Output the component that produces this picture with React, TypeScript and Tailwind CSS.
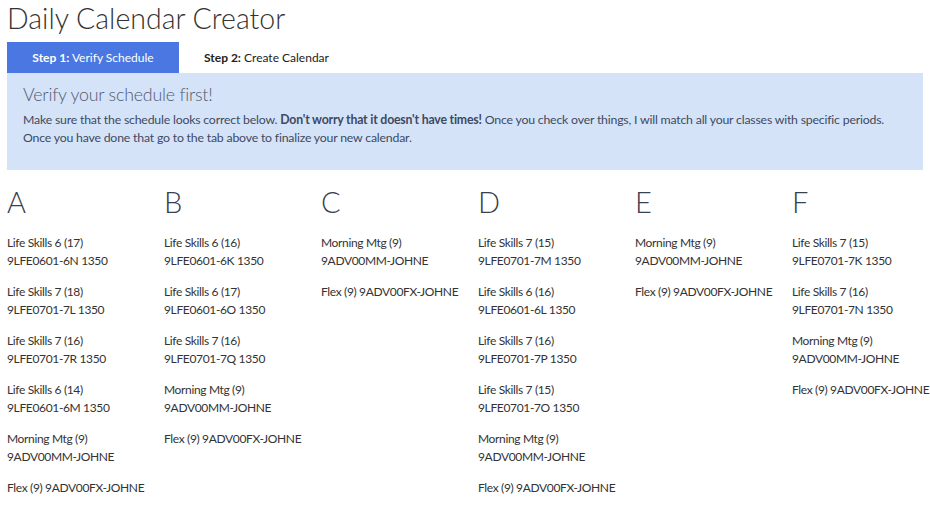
const columns: { letter: string; items: string[][] }[] = [
  {
    letter: 'A',
    items: [
      ['Life Skills 6 (17)', '9LFE0601-6N 1350'],
      ['Life Skills 7 (18)', '9LFE0701-7L 1350'],
      ['Life Skills 7 (16)', '9LFE0701-7R 1350'],
      ['Life Skills 6 (14)', '9LFE0601-6M 1350'],
      ['Morning Mtg (9)', '9ADV00MM-JOHNE'],
      ['Flex (9) 9ADV00FX-JOHNE'],
    ],
  },
  {
    letter: 'B',
    items: [
      ['Life Skills 6 (16)', '9LFE0601-6K 1350'],
      ['Life Skills 6 (17)', '9LFE0601-6O 1350'],
      ['Life Skills 7 (16)', '9LFE0701-7Q 1350'],
      ['Morning Mtg (9)', '9ADV00MM-JOHNE'],
      ['Flex (9) 9ADV00FX-JOHNE'],
    ],
  },
  {
    letter: 'C',
    items: [['Morning Mtg (9)', '9ADV00MM-JOHNE'], ['Flex (9) 9ADV00FX-JOHNE']],
  },
  {
    letter: 'D',
    items: [
      ['Life Skills 7 (15)', '9LFE0701-7M 1350'],
      ['Life Skills 6 (16)', '9LFE0601-6L 1350'],
      ['Life Skills 7 (16)', '9LFE0701-7P 1350'],
      ['Life Skills 7 (15)', '9LFE0701-7O 1350'],
      ['Morning Mtg (9)', '9ADV00MM-JOHNE'],
      ['Flex (9) 9ADV00FX-JOHNE'],
    ],
  },
  {
    letter: 'E',
    items: [['Morning Mtg (9)', '9ADV00MM-JOHNE'], ['Flex (9) 9ADV00FX-JOHNE']],
  },
  {
    letter: 'F',
    items: [
      ['Life Skills 7 (15)', '9LFE0701-7K 1350'],
      ['Life Skills 7 (16)', '9LFE0701-7N 1350'],
      ['Morning Mtg (9)', '9ADV00MM-JOHNE'],
      ['Flex (9) 9ADV00FX-JOHNE'],
    ],
  },
];

export default function App() {
  return (
    <div className="w-[930px] h-[506px] overflow-hidden bg-white px-[7px] text-[#333] font-['Lato',sans-serif]">
      {/* Title */}
      <h1 className="text-[28.5px] font-light leading-[36px] text-[#333]">Daily Calendar Creator</h1>

      {/* Tabs */}
      <div className="flex mt-[6px] text-[12px]">
        <div className="w-[172px] h-[31px] flex items-center justify-center bg-[#4a77e1] text-white">
          <span>
            <b>Step 1:</b> Verify Schedule
          </span>
        </div>
        <div className="w-[175px] h-[31px] flex items-center justify-center text-[#222]">
          <span>
            <b>Step 2:</b> Create Calendar
          </span>
        </div>
      </div>

      {/* Info panel */}
      <div className="w-[916px] h-[97px] bg-[#d5e3f9] px-[16px] pt-[8px] text-[#3d4a60]">
        <h2 className="text-[17.8px] font-light leading-[26px] tracking-[-0.2px] text-[#4f5b70]">
          Verify your schedule first!
        </h2>
        <p className="text-[12.3px] leading-[18px] tracking-[-0.2px] mt-[4px] whitespace-nowrap">
          Make sure that the schedule looks correct below. <b>Don't worry that it doesn't have times!</b> Once you
          check over things, I will match all your classes with specific periods.
          <br />
          Once you have done that go to the tab above to finalize your new calendar.
        </p>
      </div>

      {/* Schedule columns */}
      <div className="grid grid-cols-[repeat(5,157px)_1fr] mt-[14px]">
        {columns.map((col) => (
          <div key={col.letter}>
            <div className="text-[29px] font-light leading-[36px] text-[#39404f]">{col.letter}</div>
            <div className="mt-[14px] flex flex-col gap-[13px] text-[12px] leading-[18px] tracking-[-0.35px] whitespace-nowrap">
              {col.items.map((lines, i) => (
                <div key={i}>
                  {lines.map((l) => (
                    <div key={l}>{l}</div>
                  ))}
                </div>
              ))}
            </div>
          </div>
        ))}
      </div>
    </div>
  );
}
